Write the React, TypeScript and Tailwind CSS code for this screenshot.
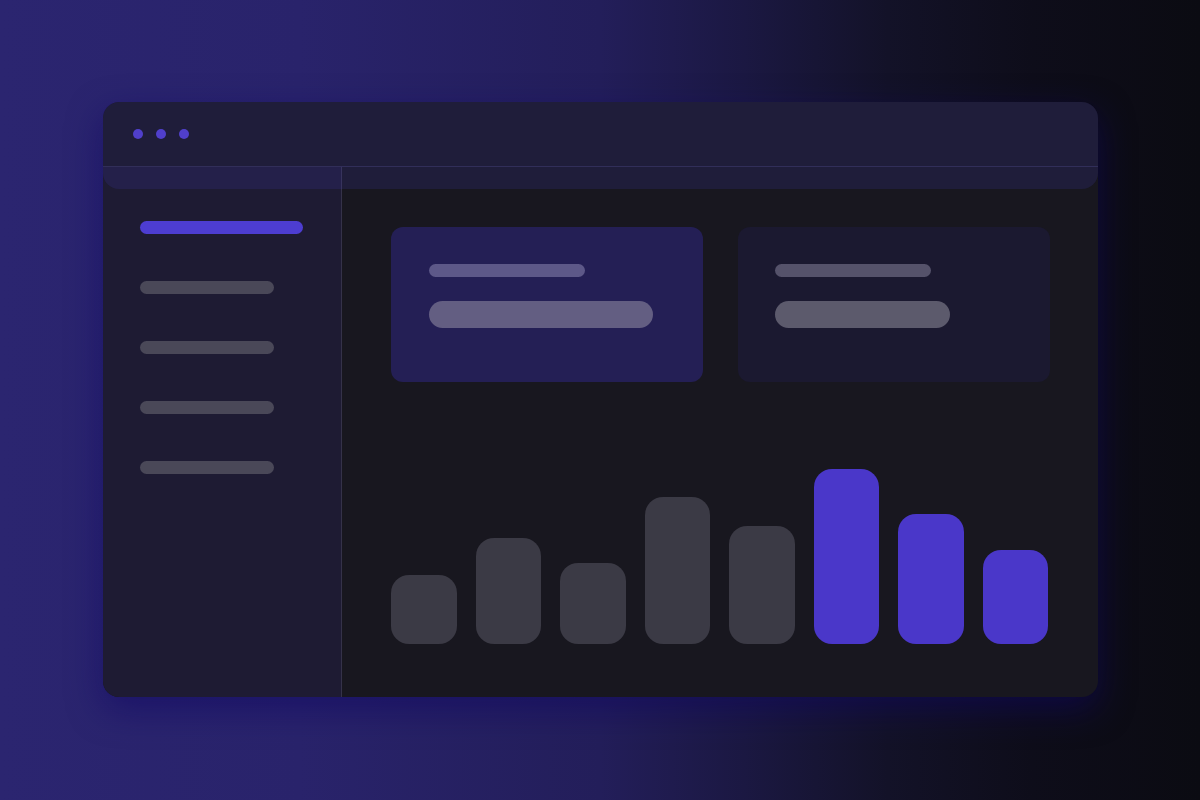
import React from 'react';

const BARS = [
  { h: 69, active: false },
  { h: 106, active: false },
  { h: 81, active: false },
  { h: 147, active: false },
  { h: 118, active: false },
  { h: 175, active: true },
  { h: 130, active: true },
  { h: 94, active: true },
];

export default function App() {
  return (
    <div className="w-[1200px] h-[800px] overflow-hidden bg-[linear-gradient(to_right,#2b2570_0%,#29236b_25%,#231e5a_50%,#1b1842_62%,#131228_74%,#0e0d1a_86%,#0b0b12_100%)] pt-[102px] pl-[103px]">
      {/* Window */}
      <div className="relative w-[995px] h-[595px] rounded-2xl overflow-hidden bg-[#18171f] shadow-[0_12px_34px_rgba(15,5,100,0.55)] flex flex-col">
        {/* header glass overlay */}
        <div className="absolute left-0 right-0 top-0 h-[87px] rounded-b-2xl bg-[rgba(70,60,200,0.16)] pointer-events-none z-10" />

        {/* Title bar */}
        <div className="h-[65px] flex-none flex items-center gap-[13px] pl-[30px] border-b border-[#2e2c44]">
          <span className="w-[10px] h-[10px] rounded-full bg-[#5340cc]" />
          <span className="w-[10px] h-[10px] rounded-full bg-[#5340cc]" />
          <span className="w-[10px] h-[10px] rounded-full bg-[#5340cc]" />
        </div>

        <div className="flex-1 flex min-h-0">
          {/* Sidebar */}
          <div className="w-[239px] flex-none bg-[#1e1b33] border-r border-[#353249] pl-[37px] pt-[54px] flex flex-col">
            <div className="w-[163px] h-[13px] rounded-full bg-[#4d3dd1]" />
            <div className="flex flex-col gap-[47px] mt-[47px]">
              <div className="w-[134px] h-[13px] rounded-full bg-[#4a4858]" />
              <div className="w-[134px] h-[13px] rounded-full bg-[#4a4858]" />
              <div className="w-[134px] h-[13px] rounded-full bg-[#4a4858]" />
              <div className="w-[134px] h-[13px] rounded-full bg-[#4a4858]" />
            </div>
          </div>

          {/* Main */}
          <div className="flex-1 flex flex-col pl-[49px] pr-[48px] pt-[60px] pb-[53px]">
            <div className="grid grid-cols-2 gap-[35px] h-[155px]">
              <div className="rounded-xl bg-[#241f55] pl-[38px] pt-[37px] flex flex-col gap-[24px]">
                <div className="w-[156px] h-[13px] rounded-full bg-[#5d5888]" />
                <div className="w-[224px] h-[27px] rounded-full bg-[#635e82]" />
              </div>
              <div className="rounded-xl bg-[#1b1930] pl-[37px] pt-[37px] flex flex-col gap-[24px]">
                <div className="w-[156px] h-[13px] rounded-full bg-[#55526a]" />
                <div className="w-[175px] h-[27px] rounded-full bg-[#5c5a6c]" />
              </div>
            </div>

            {/* Chart */}
            <div className="flex-1 flex items-end gap-[19px] mr-[2px]">
              {BARS.map((b, i) => (
                <div
                  key={i}
                  className={`flex-1 rounded-[18px] ${b.active ? 'bg-[#4a37c9]' : 'bg-[#3b3a45]'}`}
                  style={{ height: b.h }}
                />
              ))}
            </div>
          </div>
        </div>
      </div>
    </div>
  );
}
